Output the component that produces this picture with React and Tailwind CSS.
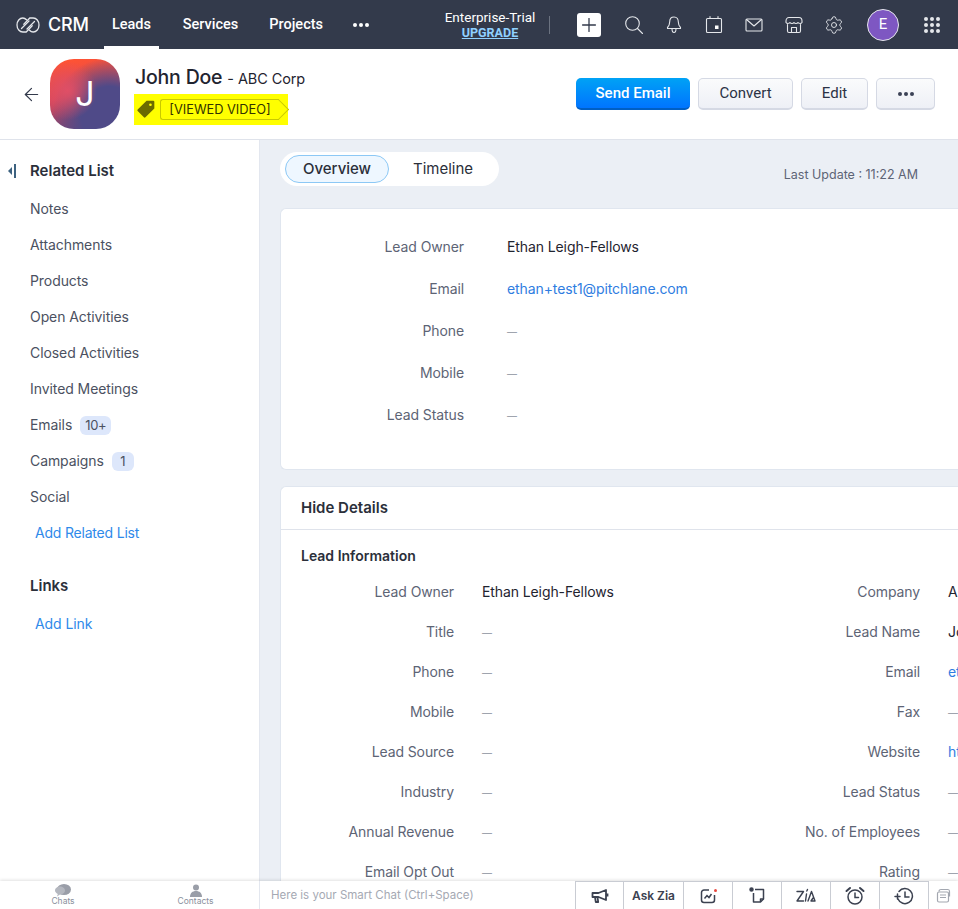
import React from 'react';
import { ArrowLeft, Settings, Plus } from 'lucide-react';

const relatedItems = [
  { label: 'Notes' },
  { label: 'Attachments' },
  { label: 'Products' },
  { label: 'Open Activities' },
  { label: 'Closed Activities' },
  { label: 'Invited Meetings' },
  { label: 'Emails', badge: '10+' },
  { label: 'Campaigns', badge: '1' },
  { label: 'Social' },
];

const overviewRows = [
  { label: 'Lead Owner', value: 'Ethan Leigh-Fellows' },
  { label: 'Email', value: 'ethan+test1@pitchlane.com', link: true },
  { label: 'Phone', value: '—', muted: true },
  { label: 'Mobile', value: '—', muted: true },
  { label: 'Lead Status', value: '—', muted: true },
];

const leftDetails = [
  ['Lead Owner', 'Ethan Leigh-Fellows'],
  ['Title', '—'],
  ['Phone', '—'],
  ['Mobile', '—'],
  ['Lead Source', '—'],
  ['Industry', '—'],
  ['Annual Revenue', '—'],
  ['Email Opt Out', '—'],
];

const rightDetails = [
  ['Company', 'ABC Corp'],
  ['Lead Name', 'John Doe'],
  ['Email', 'ethan+test1@pitchlane.com', true],
  ['Fax', '—'],
  ['Website', 'https://pitchlane.com', true],
  ['Lead Status', '—'],
  ['No. of Employees', '—'],
  ['Rating', '—'],
];

const TopIcon = ({ children }) => (
  <svg width="20" height="20" viewBox="0 0 20 20" fill="none" stroke="#e5e7eb" strokeWidth="1.1" strokeLinecap="round" strokeLinejoin="round">
    {children}
  </svg>
);

const ZohoRings = () => (
  <svg width="24" height="18" viewBox="0 0 24 18" fill="none" stroke="#e5e7eb" strokeWidth="1.3" strokeLinecap="round">
    <path d="M10.500 3.800C9.500 2.700 8.200 2 6.800 2 3.600 2 1 5 1 9s2.600 7 5.800 7h3.400l6-6.200" />
    <path d="M13.500 14.200c1 1.100 2.300 1.800 3.700 1.800 3.200 0 5.800-3 5.800-7s-2.600-7-5.800-7h-3.400l-6 6.200" />
    <path d="M5.500 12.500 13 5M11 13l7.500-7.500" />
  </svg>
);

const GridIcon = () => (
  <div className="grid grid-cols-3 gap-[2px]">
    {Array.from({ length: 9 }).map((_, i) => (
      <span key={i} className="w-[4px] h-[4px] rounded-full bg-[#e5e7eb]" />
    ))}
  </div>
);

const Dots = ({ color }) => (
  <div className="flex gap-[2px]">
    <span className={`w-[4px] h-[4px] rounded-full ${color}`} />
    <span className={`w-[4px] h-[4px] rounded-full ${color}`} />
    <span className={`w-[4px] h-[4px] rounded-full ${color}`} />
  </div>
);

const TopBar = () => (
  <header className="h-[49px] bg-[#333a4b] flex items-center shrink-0 text-white font-['Roboto',sans-serif]">
    <div className="w-[104px] pl-4 flex items-center gap-[8px]">
      <ZohoRings />
      <span className="text-[18px] font-medium font-['Inter',sans-serif] tracking-[-0.2px]">CRM</span>
    </div>
    <nav className="flex h-full w-[265px] text-[14.500px] font-medium">
      <a className="w-[55px] flex items-center justify-center border-b-[3px] border-white pt-[3px]">Leads</a>
      <a className="ml-[24px] flex items-center pt-[1px]">Services</a>
      <a className="ml-[31px] flex items-center pt-[1px]">Projects</a>
      <div className="ml-[30px] flex items-center pt-[1px]"><Dots color="bg-white" /></div>
    </nav>
    <div className="ml-[75px] w-[92px] flex flex-col items-center text-[13.500px] leading-[15px]">
      <span>Enterprise-Trial</span>
      <span className="text-[12.500px] font-bold text-[#8fd0ff] underline">UPGRADE</span>
    </div>
    <div className="ml-[13px] w-px h-[18px] bg-[#6b7280]" />
    <button className="ml-[27px] w-6 h-6 bg-white rounded-[3px] flex items-center justify-center">
      <Plus size={22} color="#333a4b" strokeWidth={1.4} />
    </button>
    <div className="ml-[23px] flex items-center gap-[20px]">
      <TopIcon>
        <circle cx="8.500" cy="8.500" r="6.800" />
        <path d="m13.500 13.500 5 5" />
      </TopIcon>
      <TopIcon>
        <path d="M10 2c-2.800 0-4.300 2.200-4.300 4.800 0 3-.9 4.400-2.200 5.700v1h13v-1c-1.300-1.300-2.200-2.700-2.200-5.700C14.300 4.200 12.800 2 10 2z" />
        <path d="M8 13.800c0 2.600.9 3.700 2 3.700s2-1.100 2-3.700" />
      </TopIcon>
      <TopIcon>
        <rect x="2.500" y="3.500" width="15" height="14" rx="1" />
        <path d="M6 1.500v2M14 1.500v2" />
        <rect x="11" y="10.500" width="3.500" height="3.500" fill="#ffffff" stroke="none" />
      </TopIcon>
      <TopIcon>
        <rect x="2" y="4" width="16" height="12" rx="1" />
        <path d="m2.500 4.500 7.500 6.500 7.500-6.500" />
      </TopIcon>
      <TopIcon>
        <path d="M5 2.500h10c1.800 0 3 1.500 3 3.500v1.500c-1 1.300-2.800 1.300-4 0-1 1.300-3 1.300-4 0-1 1.300-3 1.300-4 0-1.200 1.300-3 1.300-4 0V6c0-2 1.200-3.500 3-3.500z" />
        <path d="M3.500 9.500v6.500a1.500 1.500 0 0 0 1.500 1.500h10a1.500 1.500 0 0 0 1.500-1.500V9.500M7.500 17.500v-5h5v5" />
      </TopIcon>
      <Settings size={20} color="#e5e7eb" strokeWidth={1.1} />
    </div>
    <div className="ml-[23px] w-8 h-8 rounded-full bg-[#7e57c2] border border-[#e5e7eb] flex items-center justify-center text-[15px]">E</div>
    <div className="ml-[25px]"><GridIcon /></div>
  </header>
);

const LeadHeader = () => (
  <section className="h-[91px] bg-white border-b border-[#dfe3eb] flex items-center shrink-0 font-['Inter',sans-serif]">
    <ArrowLeft size={21} color="#333a4b" strokeWidth={1.4} className="ml-[21px]" />
    <div className="ml-[8px] w-[70px] h-[70px] rounded-[24px] bg-[radial-gradient(circle_at_25%_45%,#e04f66_0%,rgba(224,79,102,0)_45%),radial-gradient(circle_at_85%_80%,#4f4a88_0%,#4f4a88_35%,rgba(79,74,136,0)_70%),linear-gradient(170deg,#ff5333_5%,#d9485a_50%,#6a4478_95%)] flex items-center justify-center text-white text-[34px] leading-none">J</div>
    <div className="ml-[15px] flex flex-col">
      <div className="flex items-baseline gap-[5px] text-[#1f2430]">
        <span className="text-[19.500px] font-medium tracking-[-0.2px]">John Doe</span>
        <span className="text-[14.500px] tracking-[-0.1px]">- ABC Corp</span>
      </div>
      <div className="mt-[1px] -ml-[1px] w-[154px] h-[31px] bg-[#ffff00] flex items-center pl-[2px]">
        <svg width="20" height="20" viewBox="0 0 18 18" fill="#6b6b00">
          <path d="M9.500 1.500h6a1 1 0 0 1 1 1v6L8.500 16.500a1 1 0 0 1-1.400 0l-5.600-5.600a1 1 0 0 1 0-1.400zM13 4a1.200 1.200 0 1 0 0 2.400A1.200 1.200 0 0 0 13 4z" fillRule="evenodd" />
        </svg>
        <div className="ml-[4px] relative h-[21px] w-[119px] border border-r-0 border-[#c9c900] rounded-l-[3px] flex items-center justify-center text-[12.800px] text-[#333300]">
          [VIEWED VIDEO]
          <span className="absolute -right-[7px] top-[2px] w-[15px] h-[15px] rotate-45 border-t border-r border-[#c9c900]" />
        </div>
      </div>
    </div>
    <div className="ml-auto mr-[23px] flex items-center gap-2 font-['Roboto',sans-serif] text-[15px]">
      <button className="w-[114px] h-8 pt-[1px] rounded-[5px] border-b-2 border-[#005fc4] bg-[linear-gradient(#00a2f5,#0074ff)] text-white font-medium">Send Email</button>
      <button className="w-[95px] h-8 rounded-[5px] border-2 border-t border-x border-[#d5d9e4] bg-[linear-gradient(#fafbfc,#eef0f6)] text-[#2b3245]">Convert</button>
      <button className="w-[67px] h-8 rounded-[5px] border-2 border-t border-x border-[#d5d9e4] bg-[linear-gradient(#fafbfc,#eef0f6)] text-[#2b3245]">Edit</button>
      <button className="w-[59px] h-8 rounded-[5px] border-2 border-t border-x border-[#d5d9e4] bg-[linear-gradient(#fafbfc,#eef0f6)] flex items-center justify-center"><Dots color="bg-[#3b4256]" /></button>
    </div>
  </section>
);

const Sidebar = () => (
  <aside className="w-[260px] shrink-0 bg-white border-r border-[#e3e7ef] pl-[30px] pt-[20px] text-sm tracking-[-0.08px] text-[#4b5161]">
    <div className="relative h-[22px] flex items-center text-[15px] font-semibold tracking-normal text-[#2b2f3a]">
      <span className="absolute -left-[22px] flex items-center gap-[2px]">
        <span className="w-0 h-0 border-y-[4px] border-y-transparent border-r-[4px] border-r-[#3d6280]" />
        <span className="w-[2px] h-[14px] bg-[#3d6280]" />
      </span>
      Related List
    </div>
    <ul className="mt-[9px]">
      {relatedItems.map((item) => (
        <li key={item.label} className="h-9 flex items-center gap-2">
          {item.label}
          {item.badge && (
            <span className="h-[19px] px-[5px] min-w-[22px] rounded-md bg-[#dde7fb] flex items-center justify-center text-[13px] tracking-[-0.3px]">{item.badge}</span>
          )}
        </li>
      ))}
      <li className="h-9 flex items-center pl-[5px] text-[#2f8aea] tracking-[-0.2px]">Add Related List</li>
    </ul>
    <div className="mt-[24px] h-[22px] flex items-center text-[15px] font-semibold tracking-normal text-[#2b2f3a]">Links</div>
    <div className="mt-[16px] h-[22px] flex items-center pl-[5px] text-[#2f8aea]">Add Link</div>
  </aside>
);

const OverviewCard = () => (
  <div className="bg-white rounded-l-md border border-r-0 border-[#e0e6ef] h-[262px] pt-[17px] shrink-0">
    {overviewRows.map((row) => (
      <div key={row.label} className="h-[42px] flex items-center text-sm">
        <span className="w-[183px] text-right text-[#5d6475] tracking-[-0.1px]">{row.label}</span>
        <span className={`ml-[43px] tracking-[-0.1px] ${row.link ? 'text-[#2f7de1]' : row.muted ? 'text-[10px] text-[#8a8f9c] pt-[2px]' : 'text-[#1f2430]'}`}>{row.value}</span>
      </div>
    ))}
  </div>
);

const DetailColumn = ({ rows, labelWidth, className }) => (
  <div className={`shrink-0 ${className}`}>
    {rows.map(([label, value, link]) => (
      <div key={label} className="h-10 flex items-center text-sm whitespace-nowrap tracking-[-0.1px]">
        <span className="text-right text-[#5d6475]" style={{ width: labelWidth }}>{label}</span>
        <span className={`ml-[28px] ${link ? 'text-[#2f7de1]' : value === '—' ? 'text-[10px] text-[#8a8f9c] pt-[2px]' : 'text-[#1f2430]'}`}>{value}</span>
      </div>
    ))}
  </div>
);

const DetailsCard = () => (
  <div className="mt-4 bg-white rounded-tl-md border border-r-0 border-b-0 border-[#e0e6ef] shrink-0 overflow-hidden">
    <div className="h-[43px] border-b border-[#dfe3eb] pl-5 flex items-center text-[15px] font-semibold text-[#2b2f3a]">Hide Details</div>
    <div className="h-[52px] pl-5 flex items-center text-sm font-semibold text-[#2b2f3a]">Lead Information</div>
    <div className="flex mt-[-10px]">
      <DetailColumn rows={leftDetails} labelWidth={173} className="w-[508px]" />
      <DetailColumn rows={rightDetails} labelWidth={131} className="w-[400px]" />
    </div>
  </div>
);

const BottomBar = () => (
  <footer className="h-[28px] bg-white shadow-[0_-1px_3px_rgba(0,0,0,0.12)] flex items-stretch shrink-0 relative font-['Inter',sans-serif]">
    <div className="w-[260px] flex border-r border-[#e3e7ef] text-[8.500px] text-[#8a8f9c]">
      <div className="w-[126px] flex flex-col items-center justify-center leading-[9px]">
        <svg width="16" height="13" viewBox="0 0 16 13" fill="#9a9ea8">
          <ellipse cx="9" cy="5.500" rx="7" ry="5.500" />
          <path d="M5 2.500c2.800 0 5 1.800 5 4s-2.200 4-5 4l-3 2 .8-2.600C1 9 0 7.800 0 6.500c0-2.200 2.200-4 5-4z" fill="#b4b7bf" />
        </svg>
        Chats
      </div>
      <div className="w-[133px] pl-[6px] flex flex-col items-center justify-center leading-[9px]">
        <svg width="14" height="13" viewBox="0 0 14 13" fill="#9a9ea8">
          <circle cx="7" cy="3.500" r="3" />
          <path d="M1 13c0-4 2.500-6 6-6s6 2 6 6z" />
        </svg>
        Contacts
      </div>
    </div>
    <div className="flex-1 pl-[11px] pt-[1px] flex items-center text-[11.500px] text-[#a5a9b3]">Here is your Smart Chat (Ctrl+Space)</div>
    <div className="flex items-stretch text-[#3b4150]">
      <div className="w-[48px] border-t border-l border-[#c9ccd3] flex items-center justify-center">
        <svg width="18" height="16" viewBox="0 0 18 16" fill="none" stroke="#3b4150" strokeWidth="1.800" strokeLinejoin="round">
          <path d="M1.500 5h6L15 2v10L7.500 9h-6zM16.500 5.500v3M4 9l.8 5h2.400L6.500 9" />
        </svg>
      </div>
      <div className="w-[60px] border-t border-l border-[#c9ccd3] flex items-center justify-center text-xs font-semibold">Ask Zia</div>
      <div className="w-[49px] border-t border-l border-[#c9ccd3] flex items-center justify-center relative">
        <svg width="16" height="16" viewBox="0 0 16 16" fill="none" stroke="#3b4150" strokeWidth="1.500">
          <path d="M9 2H4a2.500 2.500 0 0 0-2.500 2.500V12A2.500 2.500 0 0 0 4 14.500h8a2.500 2.500 0 0 0 2.500-2.500V7" />
          <path d="M4.500 10.500 7 7.500l2 2 2.500-3.500" />
        </svg>
        <span className="absolute top-[7px] right-[15px] w-[3px] h-[3px] rounded-full bg-[#e8483f]" />
      </div>
      <div className="w-[49px] border-t border-l border-[#c9ccd3] flex items-center justify-center">
        <svg width="17" height="17" viewBox="0 0 17 17" fill="none" stroke="#3b4150" strokeWidth="1.500" strokeLinejoin="round">
          <circle cx="2.500" cy="2.500" r="1.500" fill="#3b4150" />
          <path d="M6 2.500h8.500V12l-3 3H4.500V6" />
          <path d="M11.500 15v-3h3" />
        </svg>
      </div>
      <div className="w-[49px] border-t border-l border-[#c9ccd3] flex items-center justify-center">
        <svg width="20" height="15" viewBox="0 0 20 15" fill="none" stroke="#3b4150" strokeWidth="1.400" strokeLinecap="round" strokeLinejoin="round">
          <path d="M1 3.500h6.500L1 13h6.500M9.500 13 10.500 6M10.800 3l.7-1.500M12 13l3.500-9.500L19 13h-4l2-3" />
        </svg>
      </div>
      <div className="w-[49px] border-t border-l border-[#c9ccd3] flex items-center justify-center">
        <svg width="20" height="20" viewBox="0 0 20 20" fill="none" stroke="#3b4150" strokeWidth="1.500" strokeLinecap="round">
          <circle cx="10" cy="11" r="7" />
          <path d="M10 7v4.500h3.500" />
          <path d="M1.500 5 5 2M18.500 5 15 2" strokeWidth="2" />
        </svg>
      </div>
      <div className="w-[49px] border-t border-l border-[#c9ccd3] flex items-center justify-center">
        <svg width="20" height="18" viewBox="0 0 20 18" fill="none" stroke="#3b4150" strokeWidth="1.500" strokeLinecap="round">
          <path d="M5 4.500A7.500 7.500 0 1 1 4 12" />
          <path d="M11 5v5h4" />
          <path d="M1 9.500h5M3.500 7v5" />
        </svg>
      </div>
      <div className="w-[30px] border-l border-[#c9ccd3] flex items-center justify-center">
        <svg width="15" height="15" viewBox="0 0 15 15" fill="none" stroke="#a3a7b0" strokeWidth="1.200" strokeLinejoin="round">
          <path d="M3 3.500C3 2 4 1.500 5 1.500h7c1 0 1.500.8 1.500 2v5" />
          <path d="M1.500 5.500c0-1 .7-1.500 1.500-1.500h8c.8 0 1.500.5 1.500 1.500v7c0 1-.7 1.500-1.500 1.500H3c-.8 0-1.500-.5-1.500-1.500z" />
          <path d="M4 7h6M4 9.500h6" />
        </svg>
      </div>
    </div>
  </footer>
);

export default function App() {
  return (
    <div className="w-[958px] h-[909px] overflow-hidden flex flex-col font-['Inter',sans-serif] bg-[#ebeff5]">
      <TopBar />
      <LeadHeader />
      <div className="flex flex-1 min-h-0">
        <Sidebar />
        <main className="flex-1 min-w-0 pl-[20px] overflow-hidden flex flex-col">
          <div className="h-[68px] flex items-start pt-[12px] shrink-0">
            <div className="w-[219px] h-[34px] bg-white rounded-full flex items-center pl-[5px] text-[15px]">
              <span className="w-[104px] h-[28px] rounded-full border border-[#8cc8f5] bg-[#eef7ff] flex items-center justify-center font-medium text-[#2b2f3a]">Overview</span>
              <span className="ml-[24px] text-[#2b2f3a]">Timeline</span>
            </div>
            <span className="ml-auto mr-[40px] mt-[14px] text-[12.500px] text-[#5d6475]">Last Update : 11:22 AM</span>
          </div>
          <OverviewCard />
          <DetailsCard />
        </main>
      </div>
      <BottomBar />
    </div>
  );
}
